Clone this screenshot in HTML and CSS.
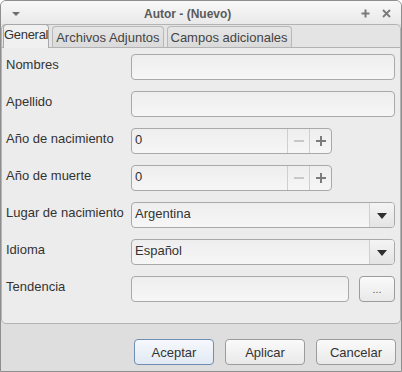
FILE: index.html
```html
<!DOCTYPE html>
<html lang="es">
<head>
    <meta charset="UTF-8">
    <title>Autor - (Nuevo)</title>
    <link rel="stylesheet" href="styles.css">
</head>
<body>
<div class="window">
    <div class="titlebar">
        <div class="tb-left"><span class="menu-arrow"></span></div>
        <div class="title">Autor - (Nuevo)</div>
        <div class="tb-right">
            <span class="tb-btn">
                <svg width="9" height="9" viewBox="0 0 9 9"><path d="M4.5 0.5v8M0.5 4.5h8" stroke="#7a7a7a" stroke-width="2"/></svg>
            </span>
            <span class="tb-btn">
                <svg width="9" height="9" viewBox="0 0 9 9"><path d="M1 1l7 7M8 1l-7 7" stroke="#7a7a7a" stroke-width="1.8"/></svg>
            </span>
        </div>
    </div>

    <div class="tabpane">
        <div class="tabbar">
            <div class="tab active">General</div>
            <div class="tab">Archivos Adjuntos</div>
            <div class="tab">Campos adicionales</div>
        </div>

        <div class="form">
            <label>Nombres</label>
            <div class="field"></div>

            <label>Apellido</label>
            <div class="field"></div>

            <label>Año de nacimiento</label>
            <div class="spinner">
                <div class="spin-value">0</div>
                <div class="spin-btn disabled">
                    <svg width="10" height="10" viewBox="0 0 10 10"><path d="M0 5h10" stroke="#c8c8c8" stroke-width="2"/></svg>
                </div>
                <div class="spin-btn">
                    <svg width="10" height="10" viewBox="0 0 10 10"><path d="M5 0v10M0 5h10" stroke="#7c7c7c" stroke-width="2"/></svg>
                </div>
            </div>

            <label>Año de muerte</label>
            <div class="spinner">
                <div class="spin-value">0</div>
                <div class="spin-btn disabled">
                    <svg width="10" height="10" viewBox="0 0 10 10"><path d="M0 5h10" stroke="#c8c8c8" stroke-width="2"/></svg>
                </div>
                <div class="spin-btn">
                    <svg width="10" height="10" viewBox="0 0 10 10"><path d="M5 0v10M0 5h10" stroke="#7c7c7c" stroke-width="2"/></svg>
                </div>
            </div>

            <label>Lugar de nacimiento</label>
            <div class="combo">
                <div class="combo-value">Argentina</div>
                <div class="combo-arrow"><span class="arrow-down"></span></div>
            </div>

            <label>Idioma</label>
            <div class="combo">
                <div class="combo-value">Español</div>
                <div class="combo-arrow"><span class="arrow-down"></span></div>
            </div>

            <label>Tendencia</label>
            <div class="picker">
                <div class="field"></div>
                <button class="dots-button">...</button>
            </div>
        </div>
    </div>

    <div class="actions">
        <button class="default">Aceptar</button>
        <button>Aplicar</button>
        <button>Cancelar</button>
    </div>
</div>
</body>
</html>
```

FILE: styles.css
```css
* {
    box-sizing: border-box;
}

body {
    margin: 0;
    background-color: #ffffff;
    font-family: "Liberation Sans", Arial, sans-serif;
    font-size: 13px;
    color: #333333;
}

.window {
    width: 402px;
    height: 372px;
    border: 1px solid #8e8e8e;
    border-radius: 6px 6px 0 0;
    background-color: #dedede;
    display: flex;
    flex-direction: column;
    overflow: hidden;
}

/* title bar */
.titlebar {
    height: 23px;
    display: flex;
    align-items: center;
    background: linear-gradient(#f8f8f8, #e9e9e9);
}

.tb-left {
    width: 19px;
    padding-left: 11px;
}

.menu-arrow {
    display: block;
    width: 0;
    height: 0;
    border-left: 4px solid transparent;
    border-right: 4px solid transparent;
    border-top: 4px solid #6e6e6e;
    margin-top: 2px;
}

.title {
    flex: 1;
    padding: 3px 0 0 124px;
    font-size: 12px;
    font-weight: bold;
    color: #5a5a5a;
}

.tb-right {
    display: flex;
    gap: 12px;
    padding-right: 10px;
    padding-top: 2px;
}

.tb-btn {
    display: flex;
}

/* tabs */
.tabpane {
    height: 300px;
    border: 1px solid #b3b3b3;
    border-radius: 5px;
    background-color: #ececec;
}

.tabbar {
    height: 23px;
    display: flex;
    align-items: flex-end;
    gap: 3px;
    padding-left: 1px;
    border-bottom: 1px solid #b3b3b3;
    background-color: #e4e4e4;
    border-radius: 5px 5px 0 0;
}

.tab {
    height: 21px;
    padding: 3px 3px 0;
    border: 1px solid #b8b8b8;
    border-bottom: none;
    border-radius: 4px 4px 0 0;
    background: linear-gradient(#e6e6e6, #dadada);
    color: #444444;
    white-space: nowrap;
}

.tab.active {
    height: 24px;
    margin-bottom: -1px;
    padding: 2px 0 0;
    letter-spacing: -0.3px;
    background: #f0f0f0;
    border-color: #a8a8a8;
    color: #333333;
}

/* form */
.form {
    display: grid;
    grid-template-columns: 125px 1fr;
    grid-auto-rows: 26px;
    row-gap: 11px;
    padding: 6px 5px 0 4px;
}

.form label {
    padding-top: 3px;
    line-height: 16px;
}

.field,
.spinner,
.combo {
    height: 26px;
    border: 1px solid #a9a9a9;
    border-radius: 4px;
    background: linear-gradient(#eeeeee, #f6f6f6);
}

.spinner {
    width: 201px;
    display: flex;
}

.spin-value,
.combo-value {
    flex: 1;
    padding: 3px 3px 0;
    line-height: 16px;
}

.spin-btn {
    width: 22px;
    border-left: 1px solid #cfcfcf;
    display: flex;
    align-items: center;
    justify-content: center;
}

.combo {
    display: flex;
}

.combo-arrow {
    width: 25px;
    border-left: 1px solid #cfcfcf;
    background: linear-gradient(#f4f4f4, #e4e4e4);
    border-radius: 0 3px 3px 0;
    display: flex;
    align-items: center;
    justify-content: center;
}

.arrow-down {
    width: 0;
    height: 0;
    border-left: 5px solid transparent;
    border-right: 5px solid transparent;
    border-top: 6px solid #2e2e2e;
    margin-top: 2px;
}

.picker {
    display: flex;
    gap: 10px;
}

.picker .field {
    flex: 1;
}

.dots-button {
    width: 36px;
    height: 26px;
    padding: 0;
    font-size: 11px;
    color: #7a5a40;
}

/* bottom buttons */
.actions {
    flex: 1;
    display: flex;
    justify-content: flex-end;
    align-items: flex-start;
    gap: 11px;
    padding: 15px 5px 0 0;
}

button {
    font-family: "Liberation Sans", Arial, sans-serif;
    font-size: 13px;
    color: #333333;
    width: 80px;
    height: 26px;
    border: 1px solid #9c9c9c;
    border-radius: 4px;
    background: linear-gradient(#fafafa, #e9e9e9);
}

button.default {
    border-color: #6f8db5;
    background: linear-gradient(#f6f9fd, #e1e9f4);
}
```
